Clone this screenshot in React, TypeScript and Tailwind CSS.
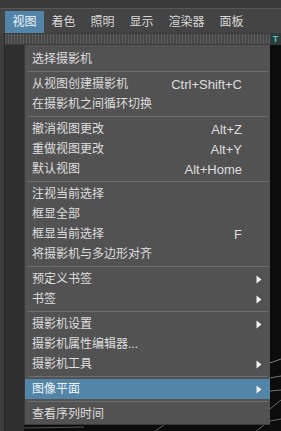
import React from "react";

type Item =
  | { sep: true }
  | { label: string; key?: string; sub?: boolean; active?: boolean; sep?: false };

const items: Item[] = [
  { label: "选择摄影机" },
  { sep: true },
  { label: "从视图创建摄影机", key: "Ctrl+Shift+C" },
  { label: "在摄影机之间循环切换" },
  { sep: true },
  { label: "撤消视图更改", key: "Alt+Z" },
  { label: "重做视图更改", key: "Alt+Y" },
  { label: "默认视图", key: "Alt+Home" },
  { sep: true },
  { label: "注视当前选择" },
  { label: "框显全部" },
  { label: "框显当前选择", key: "F" },
  { label: "将摄影机与多边形对齐" },
  { sep: true },
  { label: "预定义书签", sub: true },
  { label: "书签", sub: true },
  { sep: true },
  { label: "摄影机设置", sub: true },
  { label: "摄影机属性编辑器..." },
  { label: "摄影机工具", sub: true },
  { sep: true },
  { label: "图像平面", sub: true, active: true },
  { sep: true },
  { label: "查看序列时间" },
];

const tabs = ["视图", "着色", "照明", "显示", "渲染器", "面板"];

function Arrow() {
  return (
    <svg width="6" height="9" viewBox="0 0 6 9" className="absolute right-[8px] top-[6px]">
      <polygon points="0.5,0.5 5.5,4.5 0.5,8.5" fill="#f2f2f2" />
    </svg>
  );
}

export default function App() {
  return (
    <div
      className="flex h-[431px] w-[281px] flex-col overflow-hidden bg-[#444444] text-[#dedede]"
      style={{ fontFamily: '"Liberation Sans", "Noto Sans CJK SC", sans-serif' }}
    >
      {/* top band */}
      <div className="h-[9px] shrink-0 border-b border-[#575757] bg-[#3a3a3a]" />

      {/* menubar */}
      <div className="flex h-[24px] shrink-0 items-center bg-[#444444] pl-[5px] pt-px">
        {tabs.map((t, i) => (
          <div
            key={t}
            className={`flex h-[22px] items-center px-[7.5px] text-[12px] leading-none ${
              i === 0 ? "bg-[#5285a8] text-[#eef4f8]" : "text-[#d8d8d8]"
            }`}
          >
            {t}
          </div>
        ))}
      </div>

      <div className="flex min-h-0 flex-1">
        {/* left strip */}
        <div className="w-[5px] shrink-0 border-r border-[#262626] bg-[#3e3e3e]" />

        <div className="flex w-[265px] shrink-0 flex-col">
          {/* dotted toolbar strip */}
          <div className="h-[12px] shrink-0 border-y border-[#3a3a3a] bg-[#4d4d4d] bg-[image:repeating-linear-gradient(90deg,#5e5e5e_0_1px,#474747_1px_3px)]" />

          <div className="flex min-h-0 flex-1">
            <div className="w-[19px] shrink-0 bg-[#2f2f2f]" />

            <div className="flex min-h-0 flex-1 flex-col">
              {/* menu */}
              <div className="flex shrink-0 flex-col border-l border-b border-[#3a3a3a] bg-[#525252] pt-[4px]">
                {items.map((it, i) =>
                  it.sep ? (
                    <div key={i} className="flex h-[5px] shrink-0 items-center pl-[3px] pr-[2px]">
                      <div className="h-px w-full bg-[#6e6e6e]" />
                    </div>
                  ) : (
                    <div
                      key={i}
                      className={`relative flex h-[20px] shrink-0 items-center pl-[7px] pr-[28px] ${
                        it.active ? "bg-[#5285a8] text-[#f0f5f9]" : ""
                      }`}
                    >
                      <span className="flex-1 text-[12px] leading-none">{it.label}</span>
                      {it.key && <span className="text-[13px] leading-none">{it.key}</span>}
                      {it.sub && <Arrow />}
                    </div>
                  )
                )}
              </div>
              {/* viewport below menu */}
              <div className="relative min-h-0 flex-1 bg-[#0c0c0c]">
                <svg width="246" height="10" className="absolute inset-0">
                  <line x1="0" y1="3" x2="60" y2="2" stroke="#8a8a8a" strokeWidth="0.6" />
                  <line x1="130" y1="7" x2="140" y2="0" stroke="#9a9a9a" strokeWidth="0.6" />
                  <line x1="230" y1="8" x2="240" y2="0" stroke="#9a9a9a" strokeWidth="0.6" />
                </svg>
              </div>
            </div>
          </div>
        </div>

        {/* right viewport edge */}
        <div className="flex flex-1 flex-col bg-[#0c0c0c]">
          <div className="flex h-[12px] items-center justify-center bg-[#2c3a3a]">
            <span className="text-[9px] font-bold leading-none text-[#4fc7bf]">T</span>
          </div>
          <div className="relative flex-1">
            <svg width="11" height="386" className="absolute inset-0">
              <line x1="0" y1="318" x2="11" y2="314" stroke="#cfcfcf" strokeWidth="0.6" />
              <line x1="0" y1="333" x2="11" y2="331" stroke="#bdbdbd" strokeWidth="0.6" />
              <line x1="0" y1="346" x2="11" y2="345" stroke="#bdbdbd" strokeWidth="0.6" />
              <line x1="0" y1="364" x2="11" y2="355" stroke="#aaaaaa" strokeWidth="0.6" />
              <line x1="0" y1="376" x2="11" y2="374" stroke="#aaaaaa" strokeWidth="0.6" />
            </svg>
          </div>
        </div>
      </div>
    </div>
  );
}
